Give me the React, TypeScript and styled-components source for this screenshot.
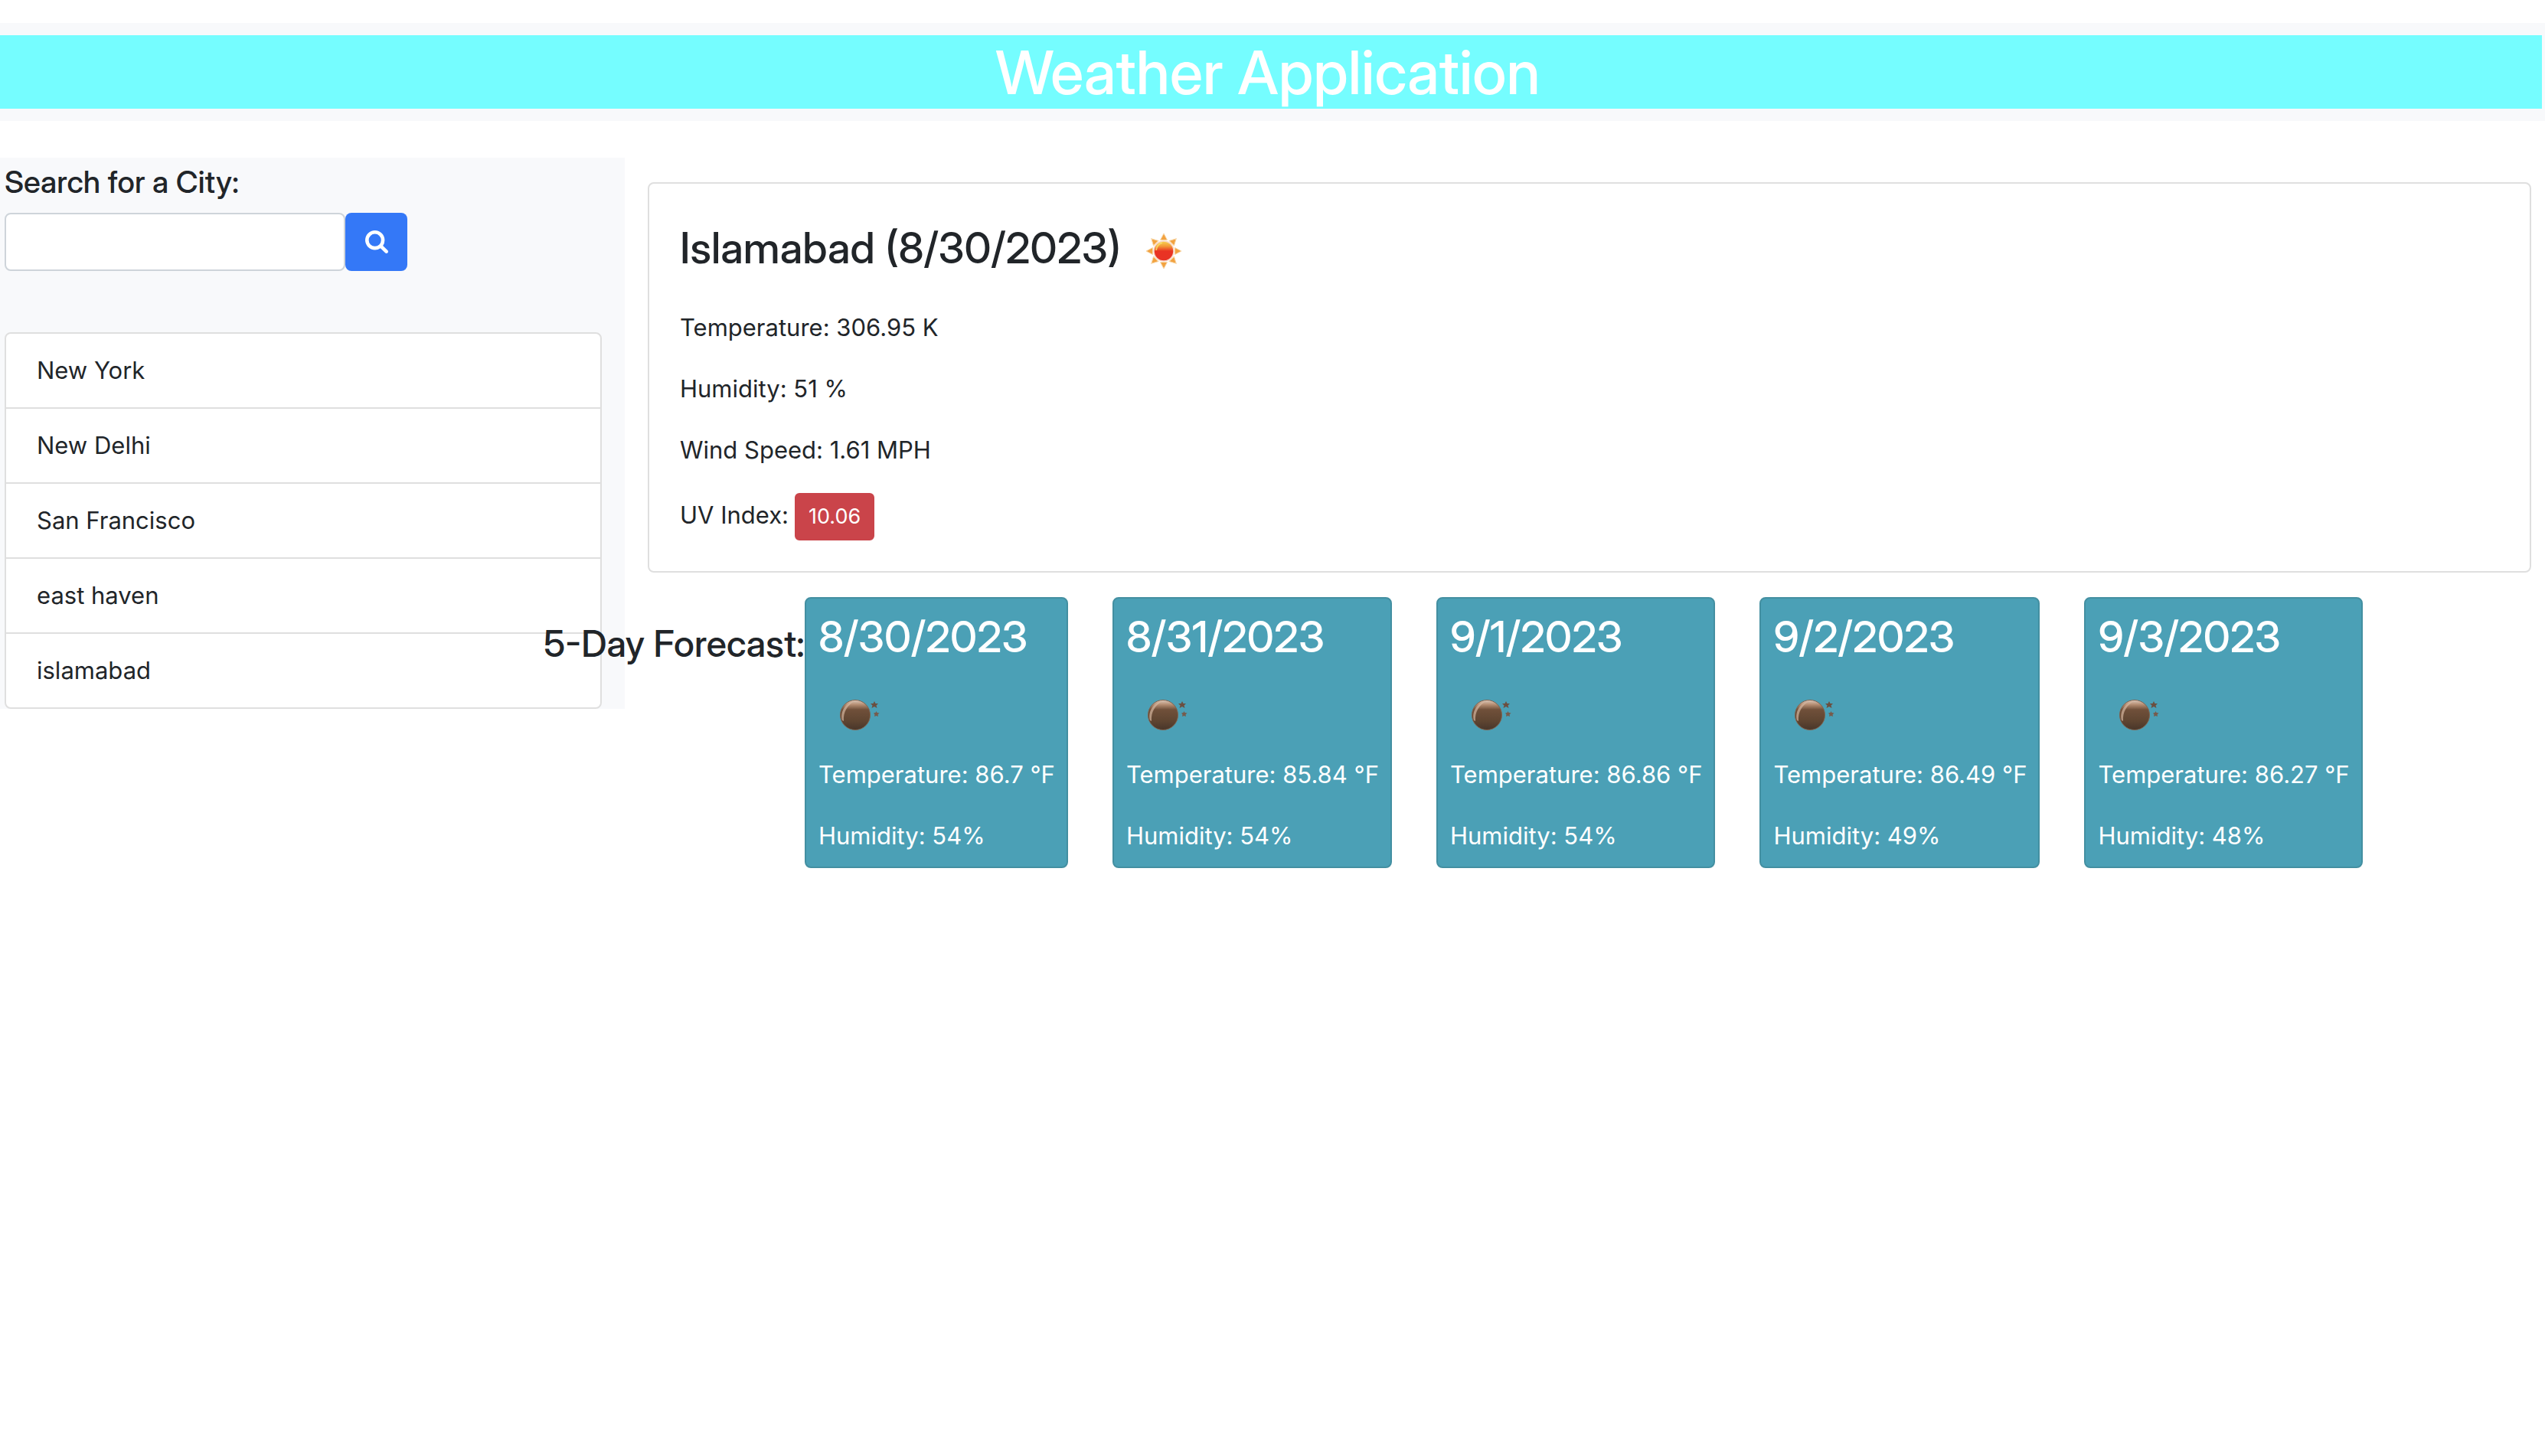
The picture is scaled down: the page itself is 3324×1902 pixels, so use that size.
import React from "react";
import styled, { createGlobalStyle } from "styled-components";

const GlobalStyle = createGlobalStyle`
  *, *::before, *::after { box-sizing: border-box; }
  body {
    margin: 0;
    background: #fff;
    color: #212529;
    font-family: Inter, Roboto, "Liberation Sans", sans-serif;
    font-size: 31px;
    line-height: 48px;
  }
  h1, h2, h3, p, ul { margin: 0; padding: 0; }
  h1, h2, h3, label {
    font-family: "Inter Display", Inter, Roboto, "Liberation Sans", sans-serif;
  }
`;

const Banner = styled.header`
  margin-top: 30px;
  padding: 16px 4px 16px 0;
  background: #f8f9fb;
`;

const BannerTitle = styled.h1`
  padding-right: 8px;
  background: #75fdff;
  color: #fff;
  font-size: 79px;
  font-weight: 500;
  line-height: 96px;
  text-align: center;
`;

const Layout = styled.div`
  display: flex;
  align-items: flex-start;
  gap: 30px;
  margin-top: 48px;
`;

const Sidebar = styled.aside`
  flex: 0 0 calc(25% - 15px);
  padding: 8px 30px 0 6px;
  background: #f8f9fb;
`;

const SearchLabel = styled.label`
  display: block;
  margin-bottom: 16px;
  font-size: 40px;
  font-weight: 500;
`;

const SearchForm = styled.form`
  display: flex;
  height: 76px;
  margin-bottom: 80px;
`;

const SearchInput = styled.input`
  width: 445px;
  padding: 12px 24px;
  border: 2px solid #ced4da;
  border-radius: 8px;
  background: #fff;
  color: #495057;
  font: inherit;
`;

const SearchButton = styled.button`
  display: flex;
  align-items: center;
  justify-content: center;
  width: 81px;
  padding: 0;
  border: 0;
  border-radius: 8px;
  background: #3478f7;
  color: #fff;
`;

const CityList = styled.ul`
  border: 2px solid #dfdfdf;
  border-radius: 8px;
  background: #fff;
  list-style: none;
`;

const CityItem = styled.li`
  padding: 24px 40px;

  & + & {
    border-top: 2px solid #dfdfdf;
  }
`;

const Main = styled.main`
  flex: 1;
  min-width: 0;
  padding: 32px 18px 0 0;
`;

const CurrentCard = styled.section`
  display: flex;
  flex-direction: column;
  gap: 32px;
  padding: 40px;
  border: 2px solid #dfdfdf;
  border-radius: 8px;
`;

const CityTitle = styled.h2`
  display: flex;
  align-items: center;
  gap: 32px;
  height: 88px;
  margin-bottom: 4px;
  font-size: 56px;
  font-weight: 500;
  line-height: 68px;

  svg {
    margin-top: 8px;
  }
`;

const UvRow = styled.p`
  display: flex;
  align-items: flex-start;
  gap: 8px;
  line-height: 58px;
`;

const UvBadge = styled.button`
  padding: 8px 16px;
  border: 2px solid #ca444a;
  border-radius: 6px;
  background: #ca444a;
  color: #fff;
  font-family: inherit;
  font-size: 27px;
  line-height: 42px;
`;

const Forecast = styled.section`
  display: flex;
  align-items: flex-start;
  margin: 32px 0 0 -137px;
`;

const ForecastTitle = styled.h2`
  flex: 0 0 342px;
  padding-top: 32px;
  font-size: 48px;
  font-weight: 500;
  line-height: 58px;
  text-align: right;
  white-space: nowrap;
`;

const Days = styled.div`
  display: flex;
  gap: 58px;
`;

const DayCard = styled.article`
  padding: 16px 15px 16px 16px;
  border: 2px solid #438fa1;
  border-radius: 8px;
  background: #4ba0b6;
  color: #fff;
  white-space: nowrap;
`;

const DayTitle = styled.h3`
  font-size: 56px;
  font-weight: 500;
  line-height: 68px;
`;

const DayIcon = styled.div`
  display: flex;
  align-items: center;
  height: 90px;
  margin: 24px 0 8px;
  padding-left: 26px;
`;

const DayText = styled.p`
  & + & {
    margin-top: 32px;
  }
`;

const SearchIcon = () => (
  <svg width="30" height="30" viewBox="0 0 1664 1664" fill="currentColor" aria-hidden="true">
    <path d="M1152 704q0-185-131.500-316.500T704 256 387.500 387.500 256 704t131.500 316.500T704 1152t316.500-131.500T1152 704zm512 832q0 52-38 90t-90 38q-54 0-90-38l-343-342q-179 124-399 124-143 0-273.500-55.500t-225-150-150-225T0 704t55.500-273.500 150-225 225-150T704 0t273.500 55.500 225 150 150 225T1408 704q0 220-124 399l343 343q37 37 37 90z" />
  </svg>
);

const SunIcon = () => (
  <svg width="48" height="48" viewBox="0 0 48 48" aria-hidden="true">
    <defs>
      <linearGradient id="sunFill" x1="0" y1="0" x2="0" y2="1">
        <stop offset="0" stopColor="#f7d552" />
        <stop offset=".25" stopColor="#f39a38" />
        <stop offset=".5" stopColor="#e93323" />
        <stop offset="1" stopColor="#e83325" />
      </linearGradient>
    </defs>
    {[0, 45, 90, 135, 180, 225, 270, 315].map((angle) => (
      <path key={angle} d="M24 1 L28.500 9.500 L19.500 9.500 Z" fill="#f2a23f" stroke="#f8d8aa" strokeWidth="1" transform={`rotate(${angle} 24 24)`} />
    ))}
    <circle cx="24" cy="24" r="13" fill="url(#sunFill)" stroke="#f8d6c4" strokeWidth="1.500" />
    <path d="M14 23 Q15 15 22 13" fill="none" stroke="#f9e06a" strokeWidth="2" opacity=".8" />
  </svg>
);

const NightIcon = () => (
  <svg width="54" height="42" viewBox="0 0 54 42" aria-hidden="true">
    <defs>
      <linearGradient id="moonFill" x1="0" y1="0" x2="0" y2="1">
        <stop offset="0" stopColor="#dcc9bb" />
        <stop offset=".15" stopColor="#b58e73" />
        <stop offset=".32" stopColor="#70503a" />
        <stop offset=".7" stopColor="#5f4531" />
        <stop offset="1" stopColor="#48362a" />
      </linearGradient>
    </defs>
    <circle cx="22" cy="20" r="19.500" fill="url(#moonFill)" stroke="#80634f" strokeWidth="1" />
    <path d="M5 27 C2 16 9 4 21 2 C12 7 6 16 7 28 Z" fill="#d5b7a0" opacity=".7" />
    <path d="M47 2 L48.500 5 L52 5 L49.500 7.500 L50.500 11 L47 9 L43.500 11 L44.500 7.500 L42 5 L45.500 5 Z" fill="#6b4f40" />
    <path d="M49.500 15 L50.500 17 L53.500 17.500 L51.500 19.500 L52 22 L49.500 21 L47 22 L47.500 19.500 L46 17.500 L48.500 17 Z" fill="#765b4c" />
  </svg>
);

const cities = ["New York", "New Delhi", "San Francisco", "east haven", "islamabad"];

const days = [
  { date: "8/30/2023", temperature: "86.7", humidity: 54 },
  { date: "8/31/2023", temperature: "85.84", humidity: 54 },
  { date: "9/1/2023", temperature: "86.86", humidity: 54 },
  { date: "9/2/2023", temperature: "86.49", humidity: 49 },
  { date: "9/3/2023", temperature: "86.27", humidity: 48 },
];

export default function App() {
  return (
    <>
      <GlobalStyle />
      <Banner>
        <BannerTitle>Weather Application</BannerTitle>
      </Banner>
      <Layout>
        <Sidebar>
          <SearchLabel htmlFor="city">Search for a City:</SearchLabel>
          <SearchForm onSubmit={(event) => event.preventDefault()}>
            <SearchInput id="city" type="text" />
            <SearchButton type="submit" aria-label="Search">
              <SearchIcon />
            </SearchButton>
          </SearchForm>
          <CityList>
            {cities.map((city) => (
              <CityItem key={city}>{city}</CityItem>
            ))}
          </CityList>
        </Sidebar>
        <Main>
          <CurrentCard>
            <CityTitle>
              Islamabad (8/30/2023)
              <SunIcon />
            </CityTitle>
            <p>Temperature: 306.95 K</p>
            <p>Humidity: 51 %</p>
            <p>Wind Speed: 1.61 MPH</p>
            <UvRow>
              UV Index:
              <UvBadge type="button">10.06</UvBadge>
            </UvRow>
          </CurrentCard>
          <Forecast>
            <ForecastTitle>5-Day Forecast:</ForecastTitle>
            <Days>
              {days.map((day) => (
                <DayCard key={day.date}>
                  <DayTitle>{day.date}</DayTitle>
                  <DayIcon>
                    <NightIcon />
                  </DayIcon>
                  <DayText>Temperature: {day.temperature} °F</DayText>
                  <DayText>Humidity: {day.humidity}%</DayText>
                </DayCard>
              ))}
            </Days>
          </Forecast>
        </Main>
      </Layout>
    </>
  );
}
